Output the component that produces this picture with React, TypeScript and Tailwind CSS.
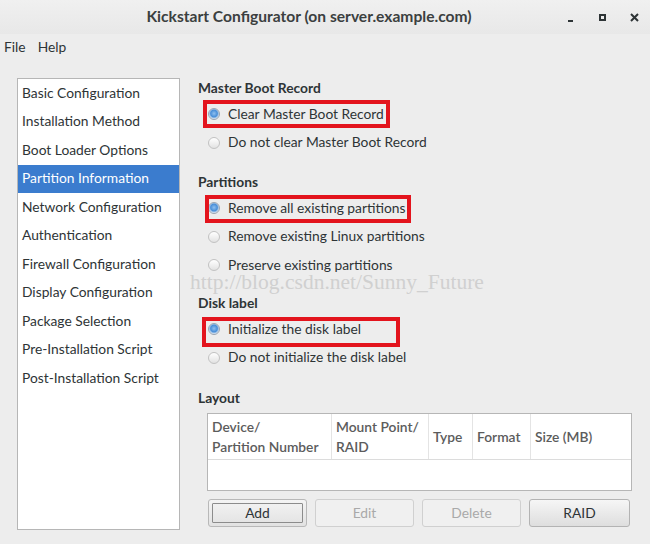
import React from 'react';

const sections = [
  'Basic Configuration',
  'Installation Method',
  'Boot Loader Options',
  'Partition Information',
  'Network Configuration',
  'Authentication',
  'Firewall Configuration',
  'Display Configuration',
  'Package Selection',
  'Pre-Installation Script',
  'Post-Installation Script',
];

function Radio({ checked }: { checked?: boolean }) {
  return (
    <span
      className={
        checked
          ? 'w-[12px] h-[12px] rounded-full border border-[#9aa4b0] bg-[radial-gradient(circle_at_50%_45%,#8fc0f0_0%,#4a8fd8_45%,#d6e4f2_70%,#f4f4f4_100%)] shrink-0'
          : 'w-[12px] h-[12px] rounded-full border border-[#c2c2c2] bg-gradient-to-b from-[#ffffff] to-[#e2e2e2] shrink-0'
      }
    />
  );
}

function RadioRow({
  label,
  checked,
  box,
}: {
  label: string;
  checked?: boolean;
  box?: string;
}) {
  return (
    <div className="relative h-[28.5px] flex items-center pl-[10px] gap-[8px]">
      <Radio checked={checked} />
      <span>{label}</span>
      {box && <span className={`absolute border-[4px] border-[#e3141d] ${box}`} />}
    </div>
  );
}

function Heading({ children, className = '' }: { children: React.ReactNode; className?: string }) {
  return <div className={`h-[20px] flex items-center font-bold text-[#2e3436] ${className}`}>{children}</div>;
}

export default function App() {
  return (
    <div
      className="relative w-[650px] h-[544px] bg-[#ededed] text-[13.8px] text-[#2e3436] overflow-hidden"
      style={{ fontFamily: 'Lato, "Liberation Sans", sans-serif' }}
    >
      {/* title bar */}
      <div className="h-[34px] flex items-center bg-gradient-to-b from-[#f0f0f0] to-[#e8e8e8]">
        <div className="flex-1 text-center pl-[54px] font-bold text-[#3b3f40] text-[15.6px]">
          Kickstart Configurator (on server.example.com)
        </div>
        <div className="flex items-center gap-[20px] pr-[10px] text-[#2e3436] font-bold">
          <span className="w-[12px] flex justify-center">
            <span className="w-[5px] h-[2px] bg-[#2e3436] mt-[8px]" />
          </span>
          <span className="w-[12px] flex justify-center">
            <span className="w-[7px] h-[7px] border-2 border-[#2e3436]" />
          </span>
          <span className="w-[12px] flex justify-center">
            <svg width="9" height="9" viewBox="0 0 9 9">
              <path d="M1 1L8 8M8 1L1 8" stroke="#2e3436" strokeWidth="2" />
            </svg>
          </span>
        </div>
      </div>

      {/* menu bar */}
      <div className="h-[26px] flex items-center gap-[12px] px-[4px]">
        <span>File</span>
        <span>Help</span>
      </div>

      <div className="flex pl-[17px] pt-[18px] gap-[18px]">
        {/* sidebar */}
        <div className="w-[163px] h-[452px] bg-white border border-[#b6b6b6]">
          {sections.map((s) => (
            <div
              key={s}
              className={
                s === 'Partition Information'
                  ? 'h-[28.5px] flex items-center px-[4px] bg-[#3b7cce] text-white'
                  : 'h-[28.5px] flex items-center px-[4px]'
              }
            >
              {s}
            </div>
          ))}
        </div>

        {/* main */}
        <div className="w-[434px] flex flex-col">
          <Heading>Master Boot Record</Heading>
          <div className="mt-[2px]">
            <RadioRow
              label="Clear Master Boot Record"
              checked
              box="left-[5px] top-0 w-[187px] h-[28px]"
            />
            <RadioRow label="Do not clear Master Boot Record" />
          </div>

          <Heading className="mt-[15px]">Partitions</Heading>
          <div className="mt-[2px]">
            <RadioRow
              label="Remove all existing partitions"
              checked
              box="left-[7px] top-[1px] w-[206px] h-[28px]"
            />
            <RadioRow label="Remove existing Linux partitions" />
            <RadioRow label="Preserve existing partitions" />
          </div>

          <Heading className="mt-[13.5px]">Disk label</Heading>
          <div className="mt-[2px]">
            <RadioRow
              label="Initialize the disk label"
              checked
              box="left-[4px] top-[2px] w-[198px] h-[30px]"
            />
            <RadioRow label="Do not initialize the disk label" />
          </div>

          <Heading className="mt-[16px]">Layout</Heading>
          <div className="mt-[5px] ml-[9px] w-[425px] h-[78px] bg-white border border-[#b6b6b6]">
            <div className="h-[46px] flex border-b border-[#dcdcdc] text-[#5c5c5c] font-semibold leading-[20px]">
              <div className="w-[124px] flex items-center px-[4px] border-r border-[#e4e4e4]">
                Device/
                <br />
                Partition Number
              </div>
              <div className="w-[97px] flex items-center px-[4px] border-r border-[#e4e4e4]">
                Mount Point/
                <br />
                RAID
              </div>
              <div className="w-[44px] flex items-center px-[4px] border-r border-[#e4e4e4]">Type</div>
              <div className="w-[58px] flex items-center px-[4px] border-r border-[#e4e4e4]">Format</div>
              <div className="flex-1 flex items-center px-[4px]">Size (MB)</div>
            </div>
          </div>

          <div className="mt-[8px] ml-[10px] flex gap-[8px]">
            <button className="w-[99px] h-[28px] rounded-[3px] border border-[#b8b8b8] bg-gradient-to-b from-[#f4f4f4] to-[#e2e2e2] p-[3px]">
              <span className="flex items-center justify-center w-full h-full border border-[#8c8c8c] rounded-[1px]">
                Add
              </span>
            </button>
            <button className="w-[99px] h-[28px] rounded-[3px] border border-[#d0d0d0] bg-[#f0f0f0] text-[#a9a9a9]">
              Edit
            </button>
            <button className="w-[99px] h-[28px] rounded-[3px] border border-[#d0d0d0] bg-[#f0f0f0] text-[#a9a9a9]">
              Delete
            </button>
            <button className="w-[101px] h-[28px] rounded-[3px] border border-[#b3b3b3] bg-gradient-to-b from-[#f6f6f6] to-[#dedede]">
              RAID
            </button>
          </div>
        </div>
      </div>

      {/* watermark */}
      <div
        className="absolute left-[190px] top-[272px] text-[21.5px] leading-none text-[#d0d0d0] pointer-events-none"
        style={{ fontFamily: '"Liberation Serif", serif' }}
      >
        http://blog.csdn.net/Sunny_Future
      </div>
    </div>
  );
}
